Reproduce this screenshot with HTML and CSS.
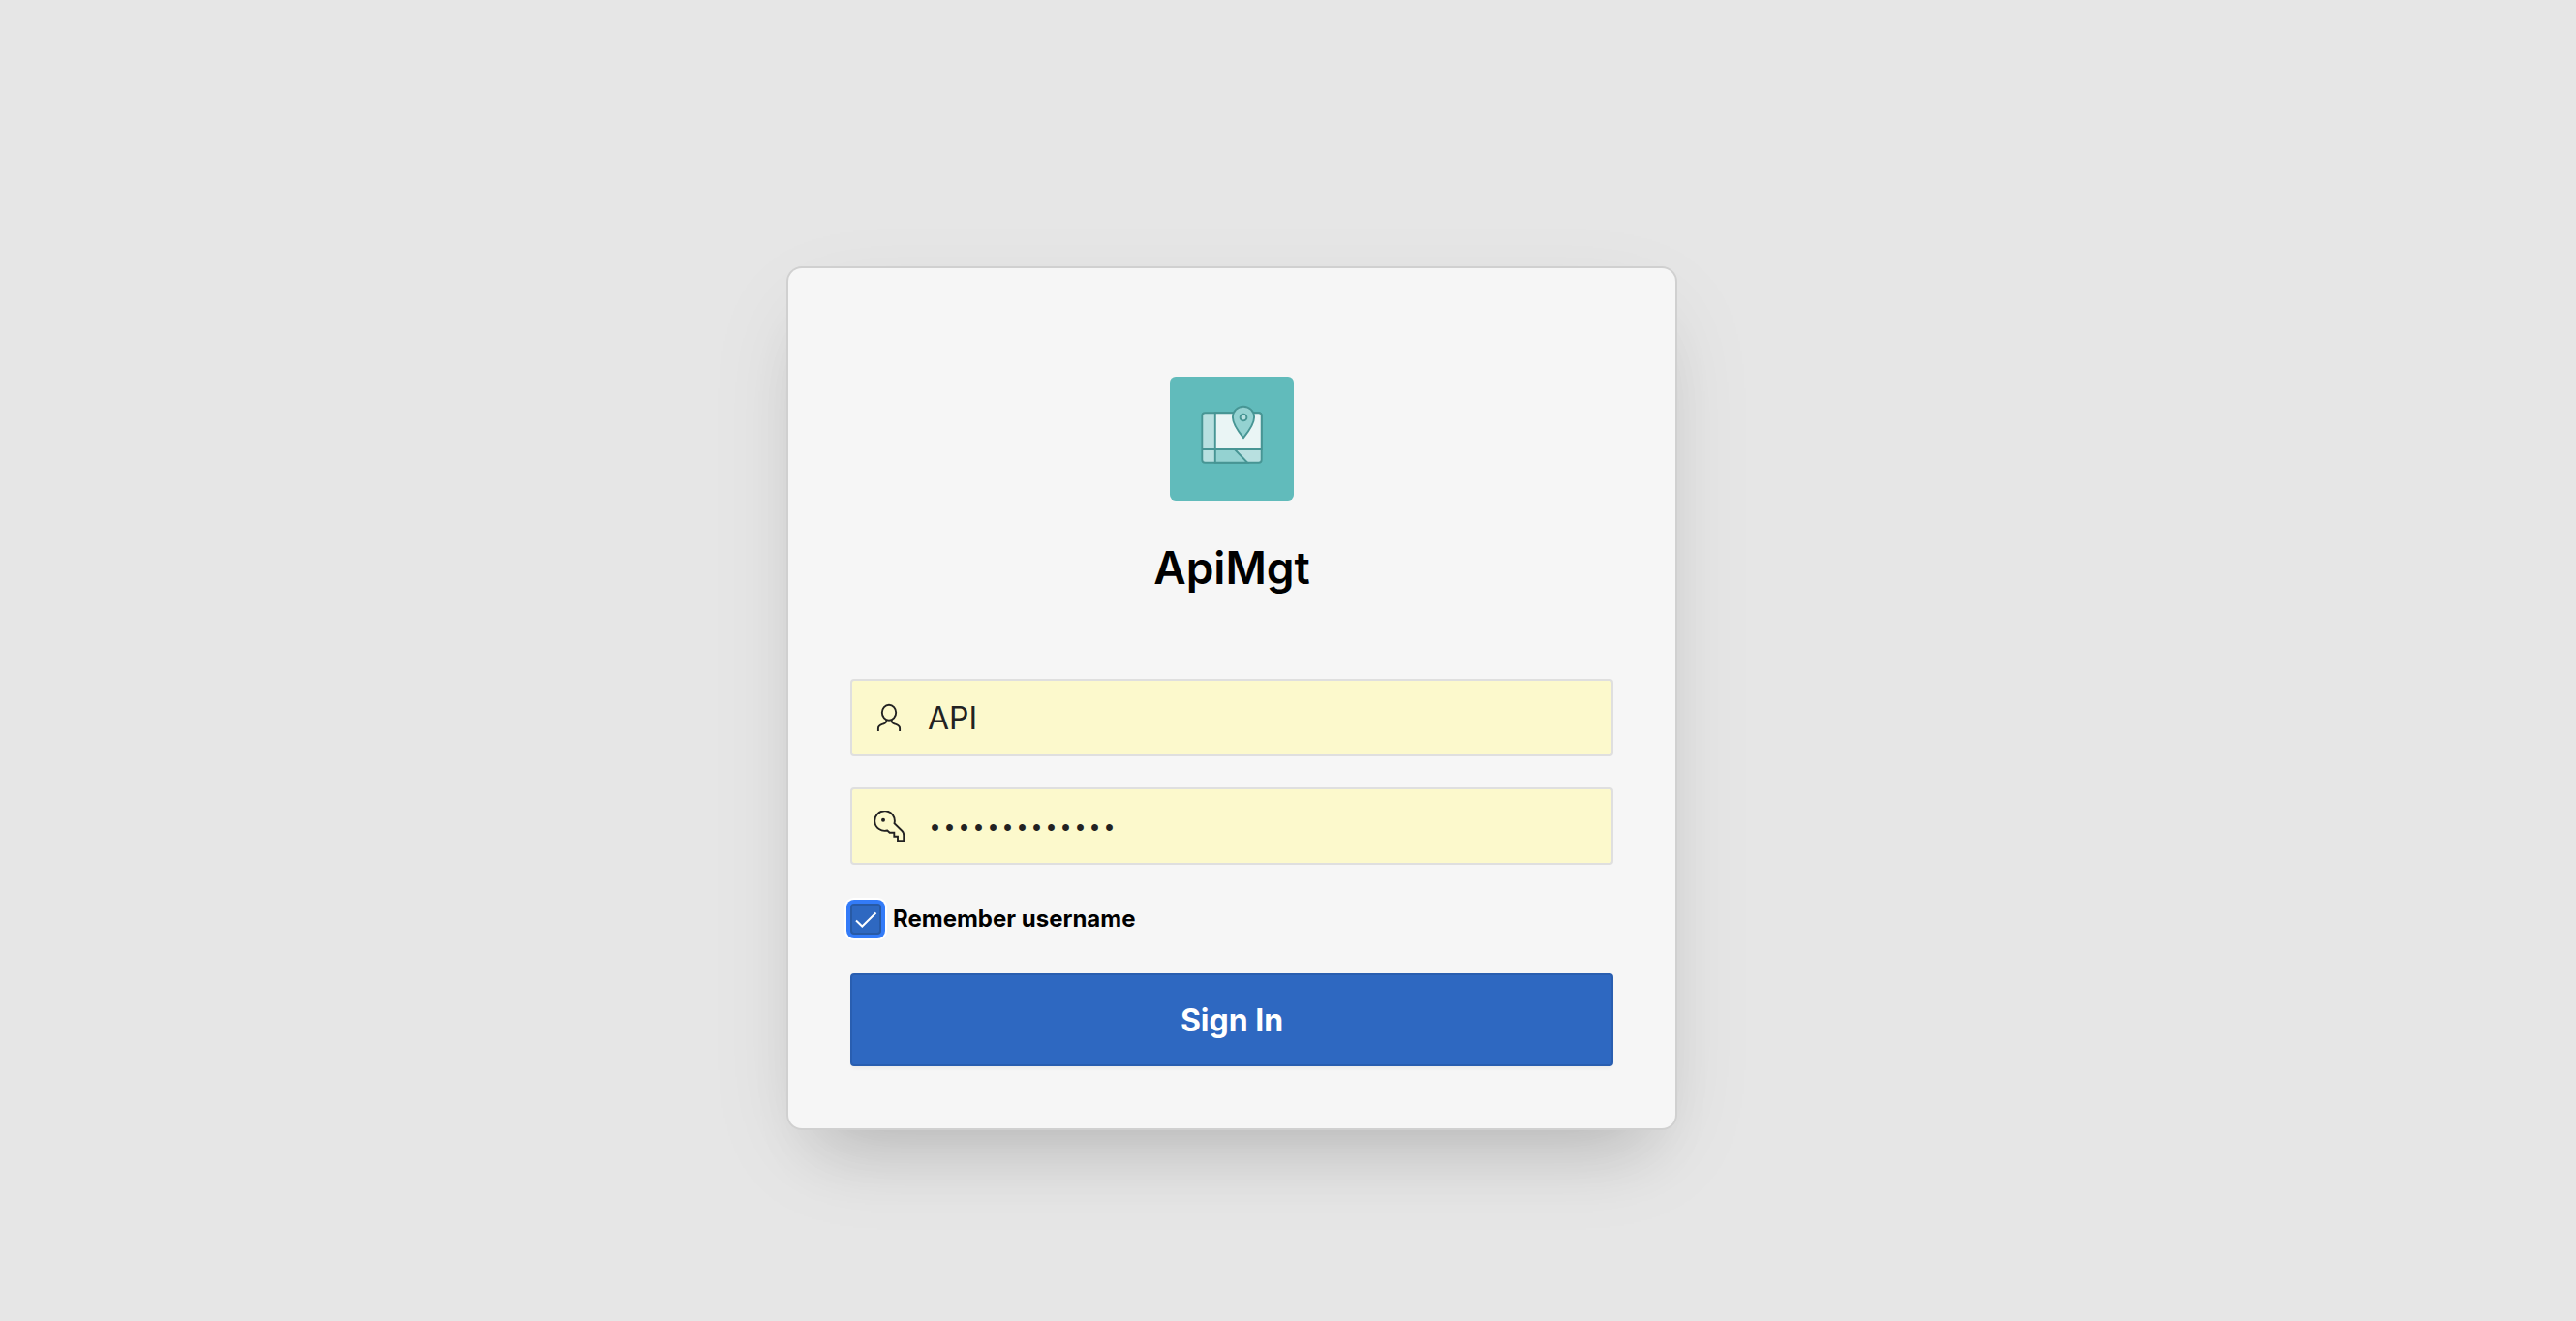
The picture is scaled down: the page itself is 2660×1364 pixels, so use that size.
FILE: index.html
```html
<!DOCTYPE html>
<html lang="en">
<head>
<meta charset="utf-8">
<meta name="viewport" content="width=device-width, initial-scale=1">
<title>ApiMgt</title>
<link rel="stylesheet" href="styles.css">
</head>
<body>
<main class="page">
  <form class="card">
    <header class="brand">
      <svg class="logo" viewBox="0 0 128 128" aria-hidden="true">
        <g stroke="#479594" stroke-width="1.9">
          <rect x="33.3" y="37.2" width="61.4" height="51.6" rx="3" fill="#b8e0e0"/>
          <path d="M46.8 37.2H91.7a3 3 0 0 1 3 3V75H46.8z" fill="#eaf5f5"/>
          <path d="M46.8 75H67L80.3 88.8H46.8z" fill="#94d2d1"/>
          <path d="M33.3 75H94.7" fill="none"/>
          <path d="M76 63.1C72 58.200 64.900 49 64.900 41.800a11.100 11.100 0 0 1 22.200 0C87.100 49 80 58.200 76 63.100z" fill="#94d2d1"/>
          <circle cx="76" cy="42" r="3.4" fill="#b8e0e0"/>
        </g>
      </svg>
      <h1 class="title">ApiMgt</h1>
    </header>
    <div class="field">
      <svg class="field-icon" viewBox="0 0 32 32" aria-hidden="true">
        <ellipse cx="16" cy="10.700" rx="7.200" ry="8"/>
        <path d="M13.300 18.200V19.500C13.300 21.500 11.500 22 9.500 22.700C6.500 23.700 4.900 24.500 4.900 27V30M18.700 18.200V19.500C18.700 21.500 20.500 22 22.500 22.700C25.500 23.700 27.100 24.500 27.100 27V30"/>
      </svg>
      <input class="input" type="text" aria-label="Username" value="API">
    </div>
    <div class="field">
      <svg class="field-icon" viewBox="0 0 32 32" aria-hidden="true">
        <path d="M21.500 13.200A10.300 10.300 0 1 0 14.300 20.500L16.700 22.800H21.300V26.800H25V31.200H31.200V25.500Q31.200 22.600 29.500 21Z"/>
        <circle class="dot" cx="10" cy="9.700" r="2"/>
      </svg>
      <input class="input input-password" type="password" aria-label="Password" value="abcdefghijklm">
    </div>
    <label class="remember">
      <input class="remember-box" type="checkbox" checked>
      <svg class="remember-tick" viewBox="0 0 32 32" aria-hidden="true"><path d="M6 17.500L12.300 23.500L26.500 9.500"/></svg>
      <span>Remember username</span>
    </label>
    <button class="submit" type="button">Sign In</button>
  </form>
</main>
</body>
</html>
```
FILE: styles.css
```css
* {
  box-sizing: border-box;
}

body {
  margin: 0;
  background: #e6e6e6;
  color: #000;
  font-family: Inter, "Liberation Sans", sans-serif;
}

.page {
  display: flex;
  justify-content: center;
  align-items: flex-start;
  min-height: 100vh;
  padding: 277px 116px 64px 0;
}

.card {
  display: flex;
  flex-direction: column;
  width: 100%;
  max-width: 916px;
  padding: 112px 64px 64px;
  border-radius: 14px;
  background: #f6f6f6;
  box-shadow:
    0 0 0 2px #d0d0d0,
    0 48px 64px -32px rgba(0, 0, 0, 0.14),
    0 32px 96px -16px rgba(0, 0, 0, 0.1);
}

.brand {
  display: flex;
  flex-direction: column;
  align-items: center;
  gap: 36px;
  margin-bottom: 82px;
}

.logo {
  width: 128px;
  height: 128px;
  border-radius: 6px;
  background: #61bbbb;
}

.title {
  margin: 0;
  font-size: 46px;
  line-height: 66px;
  font-weight: 600;
}

.field {
  display: flex;
  align-items: center;
  gap: 24px;
  height: 80px;
  margin-bottom: 32px;
  padding: 0 22px;
  border: 2px solid #dfdfdf;
  border-radius: 4px;
  background: #fcf9cc;
}

.field-icon {
  flex: none;
  width: 32px;
  height: 32px;
  fill: none;
  stroke: #222;
  stroke-width: 1.9;
}

.field-icon .dot {
  fill: #222;
  stroke: none;
}

.input {
  flex: 1;
  min-width: 0;
  height: 100%;
  padding: 0;
  border: 0;
  outline: 0;
  background: transparent;
  color: #222;
  font: 400 32px/40px Inter, "Liberation Sans", sans-serif;
}

.input-password {
  padding-top: 6px;
  font-family: "Liberation Mono", monospace;
  font-size: 25px;
}

.remember {
  display: flex;
  align-items: center;
  gap: 12px;
  position: relative;
  margin: 8px 0 40px;
  font-size: 24px;
  line-height: 32px;
  font-weight: 700;
}

.remember-box {
  appearance: none;
  width: 32px;
  height: 32px;
  margin: 0;
  border: 2px solid #285aa5;
  border-radius: 4px;
  background: #2e68c1;
  box-shadow: 0 0 0 4px #337bf8, 0 0 0 6px #fff;
}

.remember-tick {
  position: absolute;
  left: 0;
  top: 0;
  width: 32px;
  height: 32px;
  fill: none;
  stroke: #fff;
  stroke-width: 2;
  pointer-events: none;
}

.submit {
  height: 96px;
  padding: 2px 0 0;
  border: 2px solid #295eb0;
  border-radius: 4px;
  background: #2e68c1;
  box-shadow: 0 4px 4px -2px rgba(0, 0, 0, 0.05);
  color: #fff;
  font: 700 32px/40px Inter, "Liberation Sans", sans-serif;
}
```
